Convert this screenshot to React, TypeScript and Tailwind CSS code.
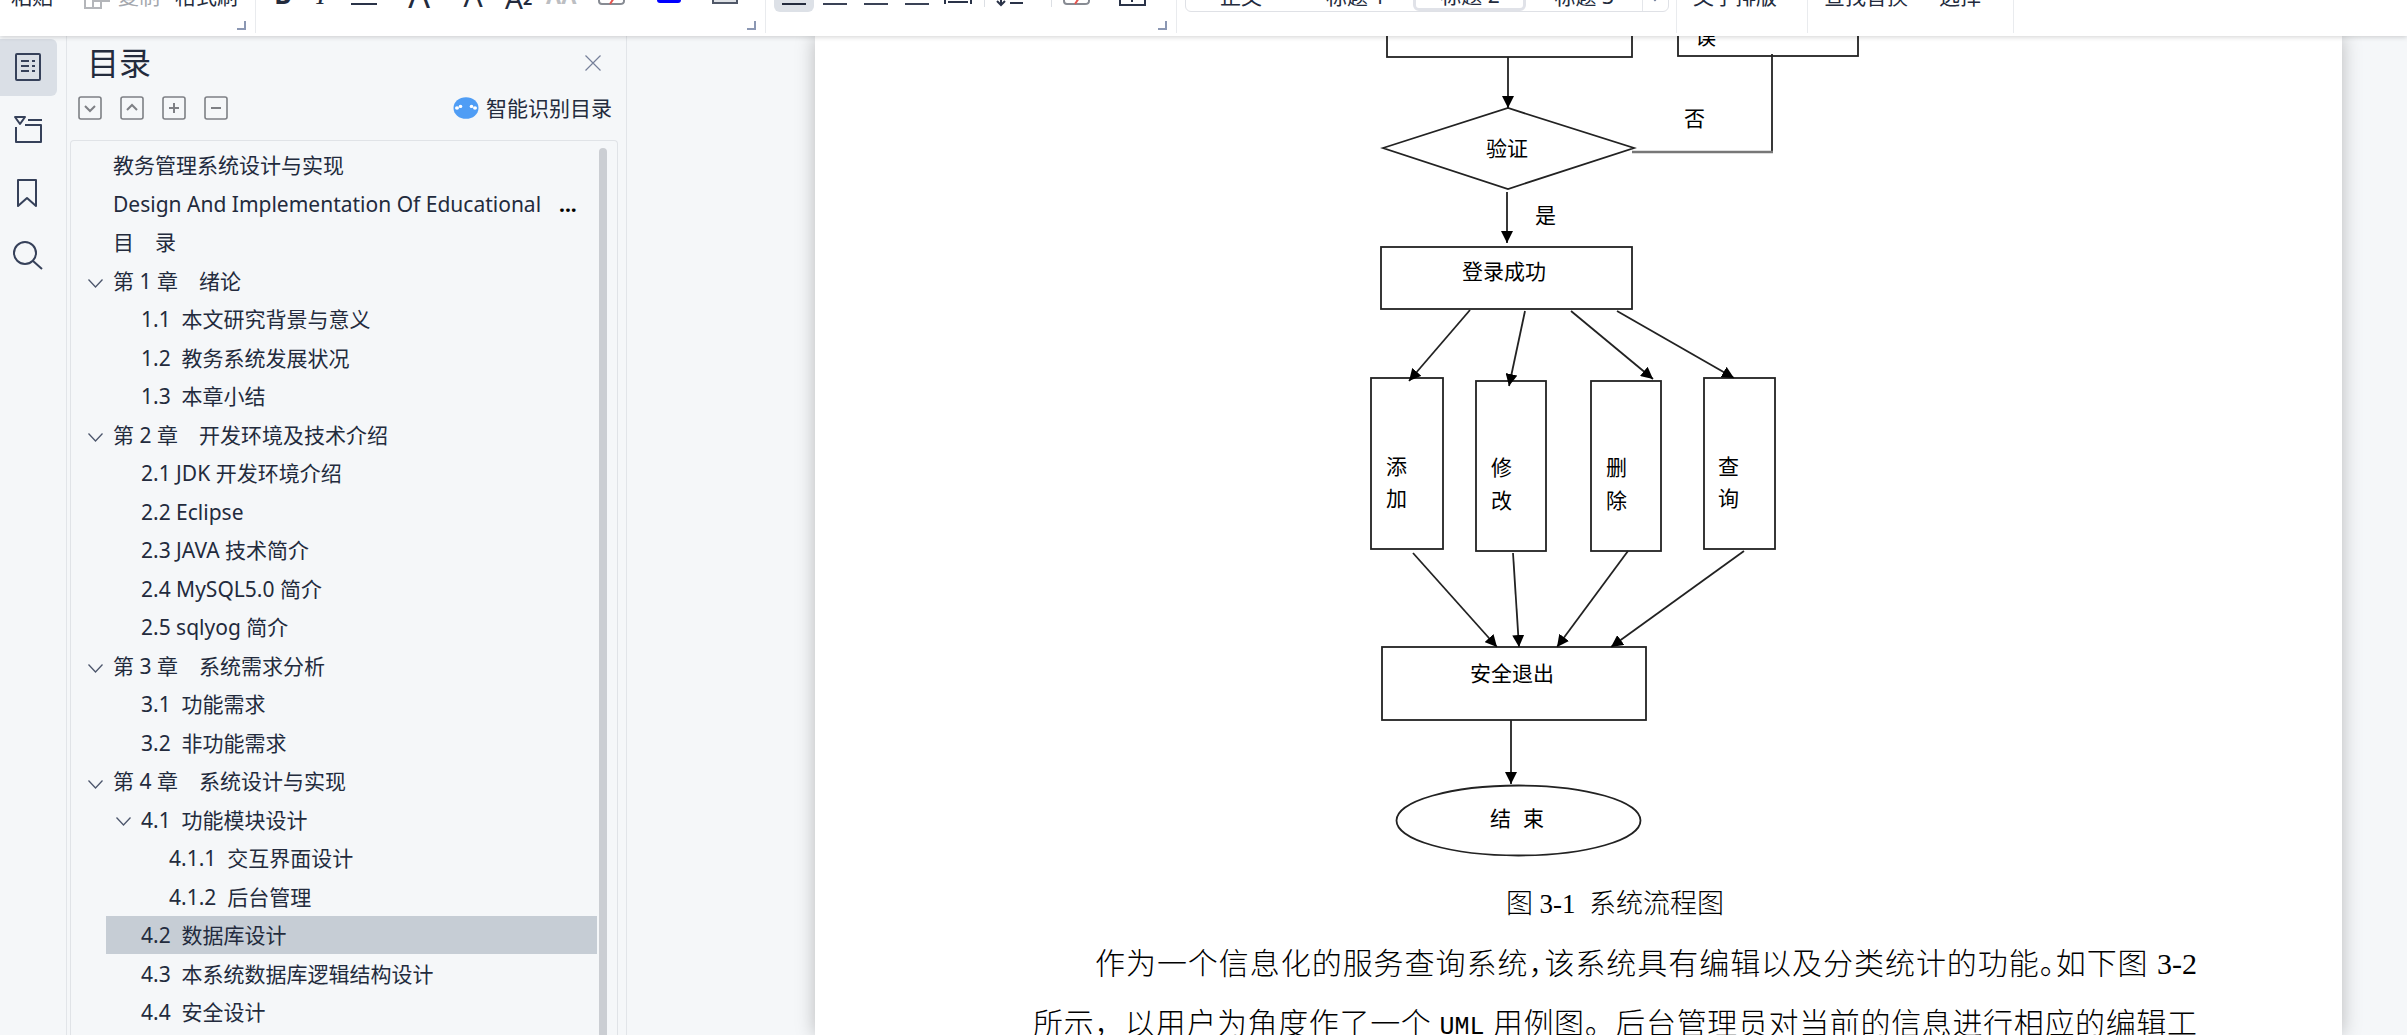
import React from 'react';

const UI_FONT = "font-['Noto_Sans','Noto_Sans_CJK_SC',sans-serif]";

/* ---------- ribbon ---------- */

function Divider({ short = false }: { short?: boolean }) {
  return <div className={short ? 'h-[7px] w-px shrink-0 bg-[#dcdfe4]' : 'h-[33px] w-px shrink-0 bg-[#e9ebee]'} />;
}

function Launcher({ label, className }: { label: string; className: string }) {
  return (
    <button aria-label={label} className={`mt-[21px] h-[9px] w-[9px] shrink-0 ${className}`}>
      <svg viewBox="0 0 9 9" className="h-[9px] w-[9px]" fill="none" stroke="#8b97b3" strokeWidth="2">
        <path d="M8 0V8H0" />
      </svg>
    </button>
  );
}

function TextButton({ children, className = '' }: { children: React.ReactNode; className?: string }) {
  return (
    <button className={`-mt-[15px] h-[22px] shrink-0 whitespace-nowrap text-[21px] leading-[22px] ${className}`}>
      {children}
    </button>
  );
}

function IconButton({ label, className = '', children }: { label: string; className?: string; children: React.ReactNode }) {
  return (
    <button aria-label={label} className={`-mt-[14px] h-[26px] shrink-0 ${className}`}>
      <svg viewBox="0 0 28 26" className="h-[26px] w-[28px]" fill="none" stroke="#2a3348" strokeWidth="2">
        {children}
      </svg>
    </button>
  );
}

function Ribbon() {
  return (
    <header className="relative z-10 flex h-9 shrink-0 items-start overflow-hidden bg-white text-[#232b3d] shadow-[0_1px_5px_rgba(0,0,0,0.18)]">
      <div className="flex w-[255px] shrink-0 items-start pl-[11px]">
        <TextButton>粘贴</TextButton>
        <IconButton label="复制图标" className="ml-[31px]">
          <path d="M9 5V22H1V13H9M9 5H25V15H9Z" stroke="#b4b6ba" />
          <path d="M1 12V22H17V15" stroke="#b4b6ba" />
        </IconButton>
        <TextButton className="ml-[6px] text-[#a4a7ad]">复制</TextButton>
        <TextButton className="ml-[15px]">格式刷</TextButton>
        <Launcher label="剪贴板设置" className="-ml-px" />
      </div>
      <Divider />
      <div className="flex w-[509px] shrink-0 items-start pl-[17px]">
        <button aria-label="加粗" className="-mt-[19px] h-[26px] w-[20px] text-[26px] font-bold leading-[26px]">B</button>
        <button aria-label="倾斜" className="-mt-[18px] ml-[18px] h-[26px] w-[20px] font-['Liberation_Serif',serif] text-[28px] italic leading-[26px]">I</button>
        <IconButton label="下划线" className="ml-[19px]">
          <path d="M1 18H27" />
        </IconButton>
        <button aria-label="增大字号" className="-mt-[18px] ml-[29px] h-[26px] w-[24px] text-[34px] leading-[26px]">A</button>
        <button aria-label="减小字号" className="-mt-[17px] ml-[31px] h-[26px] w-[22px] text-[30px] leading-[26px]">A</button>
        <button aria-label="下标" className="-mt-[19px] ml-[21px] flex h-[30px] w-[32px] items-end text-[28px] leading-[26px]">
          A<span className="text-[16px] font-bold leading-[24px]">2</span>
        </button>
        <button aria-label="文字效果" className="-mt-[18px] ml-[9px] h-[26px] w-[29px] text-[22px] font-bold leading-[26px] text-[#bcbec2]">AA</button>
        <IconButton label="清除格式" className="ml-[23px]">
          <path d="M1 4V15Q1 18 4 18H22Q26 18 26 15V4" stroke="#878b93" />
          <path d="M12 18L20 6" stroke="#e4554f" />
        </IconButton>
        <button aria-label="字体颜色" className="ml-[31px] h-[3px] w-[24px] rounded-b-sm bg-[#0000ff]" />
        <IconButton label="字符底纹" className="ml-[31px]">
          <path d="M1 4V17H25V4" fill="#dfe2e6" stroke="#505868" />
        </IconButton>
        <Launcher label="字体设置" className="ml-[7px]" />
      </div>
      <Divider />
      <div className="flex w-[410px] shrink-0 items-start pl-[8px]">
        <button aria-label="左对齐" className="flex h-[12px] w-[40px] items-start rounded-b-md bg-[#dde1e7] px-2 pt-[3px]">
          <span className="h-[2px] flex-1 bg-[#232b3d]" />
        </button>
        <button aria-label="居中" className="mt-[3px] ml-[9px] h-[2px] w-[24px] bg-[#3a4256]" />
        <button aria-label="右对齐" className="mt-[3px] ml-[17px] h-[2px] w-[24px] bg-[#3a4256]" />
        <button aria-label="两端对齐" className="mt-[3px] ml-[17px] h-[2px] w-[24px] bg-[#3a4256]" />
        <IconButton label="分散对齐" className="ml-[15px] mr-[12px]">
          <path d="M1 4V18M27 4V18M4 16H24" />
        </IconButton>
        <Divider short />
        <IconButton label="行距" className="ml-[11px] mr-[27px]">
          <path d="M5 4V19M1 15L5 19L9 15M14 17H27" />
        </IconButton>
        <Divider short />
        <IconButton label="底纹" className="ml-[11px]">
          <path d="M1 4V15Q1 18 4 18H22Q26 18 26 15V4" stroke="#878b93" />
          <path d="M12 18L18 9" stroke="#e4554f" />
        </IconButton>
        <IconButton label="边框" className="ml-[28px]">
          <path d="M1 4V19H26V4M13 4V16" />
        </IconButton>
        <Launcher label="段落设置" className="ml-[11px]" />
      </div>
      <Divider />
      <div className="flex w-[499px] shrink-0 items-start pl-[8px]">
        <div className="-mt-[30px] flex h-[42px] w-[484px] items-start rounded-b-md border border-[#dfe1e6] pt-[14px]">
          <button className="ml-[34px] h-[21px] text-[21px] leading-[20px]">正文</button>
          <button className="ml-[64px] h-[21px] text-[21px] leading-[20px]">标题 1</button>
          <button className="-mt-[14px] ml-[28px] flex h-[40px] w-[113px] items-start justify-center rounded-b-md border-[3px] border-[#e0e2e8] pt-[11px] text-[21px] leading-[20px]">
            标题 2
          </button>
          <button className="ml-[28px] h-[21px] text-[21px] leading-[20px]">标题 3</button>
          <div className="-mt-[14px] ml-[28px] h-[40px] w-px bg-[#e4e6ea]" />
          <button aria-label="更多样式" className="ml-[8px] mt-[10px]">
            <svg viewBox="0 0 8 7" className="h-[7px] w-[8px]" fill="none" stroke="#6b7896" strokeWidth="2">
              <path d="M1 2L4 5L7 2" />
            </svg>
          </button>
        </div>
      </div>
      <Divider />
      <div className="flex w-[130px] shrink-0 items-start pl-[16px]">
        <TextButton>文字排版</TextButton>
      </div>
      <Divider />
      <div className="flex w-[205px] shrink-0 items-start gap-[31px] pl-[16px]">
        <TextButton>查找替换</TextButton>
        <TextButton>选择</TextButton>
      </div>
      <Divider />
    </header>
  );
}

/* ---------- navigation rail ---------- */

function RailButton({ label, active = false, children }: { label: string; active?: boolean; children: React.ReactNode }) {
  return (
    <button
      aria-label={label}
      aria-pressed={active}
      className={`flex h-[57px] w-[57px] items-center justify-center rounded-r-md pr-[2px] pb-[2px] ${active ? 'bg-[#dadfe6]' : ''}`}
    >
      <svg viewBox="0 0 30 30" className="h-[30px] w-[30px]" fill="none" stroke="#36415a" strokeWidth="2" strokeLinejoin="round">
        {children}
      </svg>
    </button>
  );
}

function Rail() {
  return (
    <nav aria-label="导航" className="flex w-[67px] shrink-0 flex-col gap-[6px] border-r border-[#e2e5e9] pt-[3px]">
      <RailButton label="目录" active>
        <rect x="3" y="2" width="24" height="26" rx="1" />
        <path d="M8 9H16M19 9H22M8 14H16M19 14H22M8 19H16M19 19H22" />
      </RailButton>
      <RailButton label="章节">
        <path d="M2 2H12L7 9ZM15 5H29M3 12V27H28V10H12" />
      </RailButton>
      <RailButton label="书签">
        <path d="M5 2H23V28L14 20L5 28Z" />
      </RailButton>
      <RailButton label="查找">
        <ellipse cx="12" cy="12" rx="11" ry="11" />
        <path d="M20 20L29 28" />
      </RailButton>
    </nav>
  );
}

/* ---------- outline panel ---------- */

type Item = { text: string; level: 1 | 2 | 3; open?: boolean; selected?: boolean; cut?: boolean };

const OUTLINE: Item[] = [
  { text: '教务管理系统设计与实现', level: 1 },
  { text: 'Design And Implementation Of Educational', level: 1, cut: true },
  { text: '目\u3000录', level: 1 },
  { text: '第 1 章\u3000绪论', level: 1, open: true },
  { text: '1.1  本文研究背景与意义', level: 2 },
  { text: '1.2  教务系统发展状况', level: 2 },
  { text: '1.3  本章小结', level: 2 },
  { text: '第 2 章\u3000开发环境及技术介绍', level: 1, open: true },
  { text: '2.1 JDK 开发环境介绍', level: 2 },
  { text: '2.2 Eclipse', level: 2 },
  { text: '2.3 JAVA 技术简介', level: 2 },
  { text: '2.4 MySQL5.0 简介', level: 2 },
  { text: '2.5 sqlyog 简介', level: 2 },
  { text: '第 3 章\u3000系统需求分析', level: 1, open: true },
  { text: '3.1  功能需求', level: 2 },
  { text: '3.2  非功能需求', level: 2 },
  { text: '第 4 章\u3000系统设计与实现', level: 1, open: true },
  { text: '4.1  功能模块设计', level: 2, open: true },
  { text: '4.1.1  交互界面设计', level: 3 },
  { text: '4.1.2  后台管理', level: 3 },
  { text: '4.2  数据库设计', level: 2, selected: true },
  { text: '4.3  本系统数据库逻辑结构设计', level: 2 },
  { text: '4.4  安全设计', level: 2 },
];

function Chevron() {
  return (
    <svg viewBox="0 0 15 9" className="h-[9px] w-[15px] shrink-0" fill="none" stroke="#4c566c" strokeWidth="1.3">
      <path d="M0.5 0.5L7.5 8L14.5 0.5" />
    </svg>
  );
}

const INDENT = { 1: 'pl-[7px]', 2: 'pl-[35px]', 3: 'pl-[63px]' };

function OutlineRow({ item }: { item: Item }) {
  const nestedOpen = item.open && item.level === 2;
  return (
    <li className="flex h-[38px] items-center pl-[17px] even:h-[39px]">
      <span className="mr-[3px] flex w-[15px] shrink-0 pt-[6px]">{item.open && item.level === 1 && <Chevron />}</span>
      <a
        href="#outline"
        className={`flex h-full min-w-0 flex-1 items-center whitespace-pre ${nestedOpen ? 'gap-[10px] pl-[10px]' : INDENT[item.level]} ${item.selected ? 'bg-[#c6cdd5]' : ''}`}
      >
        {nestedOpen && (
          <span className="pt-[4px]">
            <Chevron />
          </span>
        )}
        <span>{item.text}</span>
        {item.cut && <span className="ml-[18px] font-bold text-black">...</span>}
      </a>
    </li>
  );
}

function ToolBox({ label, d }: { label: string; d: string }) {
  return (
    <button aria-label={label} className="h-[24px] w-[24px]">
      <svg viewBox="0 0 24 24" className="h-[24px] w-[24px]" fill="none" stroke="#7e8085" strokeWidth="2">
        <rect x="1" y="1" width="22" height="22" rx="2" strokeWidth="1.6" />
        <path d={d} />
      </svg>
    </button>
  );
}

function OutlinePanel() {
  return (
    <aside className="flex w-[560px] shrink-0 flex-col border-r border-[#e2e5e9] pl-[3px] pr-[8px]">
      <div className="flex h-[54px] items-center justify-between pl-[17px] pr-[17px]">
        <h1 className="text-[32px] leading-[40px]">目录</h1>
        <button aria-label="关闭">
          <svg viewBox="0 0 16 16" className="h-[16px] w-[16px]" fill="none" stroke="#76809a" strokeWidth="1.2">
            <path d="M0.5 0.5L15.5 15.5M15.5 0.5L0.5 15.5" />
          </svg>
        </button>
      </div>
      <div className="flex h-[36px] items-center justify-between pl-[8px] pr-[6px]">
        <div className="flex gap-[18px]">
          <ToolBox label="展开" d="M7 10L12 15L17 10" />
          <ToolBox label="收起" d="M7 14L12 9L17 14" />
          <ToolBox label="增加级别" d="M12 7V17M7 12H17" />
          <ToolBox label="降低级别" d="M7 12H17" />
        </div>
        <button className="flex items-center gap-[7px] text-[21px] leading-[28px]">
          <svg viewBox="0 0 26 22" className="h-[22px] w-[26px]">
            <ellipse cx="13" cy="11" rx="12.5" ry="10.8" fill="#4f9df5" />
            <g fill="#fff">
              <ellipse cx="4" cy="11" rx="2" ry="1.8" />
              <ellipse cx="7.5" cy="9.4" rx="1.8" ry="1.6" />
              <ellipse cx="18.5" cy="9.4" rx="1.8" ry="1.6" />
              <ellipse cx="22" cy="11" rx="2" ry="1.8" />
            </g>
          </svg>
          智能识别目录
        </button>
      </div>
      <div className="mt-[14px] flex min-h-0 flex-1 overflow-hidden rounded-t border border-b-0 border-[#e0e3e7]">
        <ul className="min-w-0 flex-1 pt-[5px] text-[21px] leading-[30px]">
          {OUTLINE.map((item) => (
            <OutlineRow key={item.text} item={item} />
          ))}
        </ul>
        <div className="ml-[2px] mr-[10px] mt-[7px] w-[8px] rounded-t-full bg-[#cbced3]" />
      </div>
    </aside>
  );
}

/* ---------- document ---------- */

const ARROWS: [number, number, number, number][] = [
  [1508, 57, 1508, 108],
  [1507, 192, 1507, 243],
  [1470, 310, 1409, 381],
  [1525, 311, 1509, 386],
  [1571, 311, 1653, 379],
  [1617, 311, 1734, 378],
  [1413, 553, 1497, 647],
  [1513, 553, 1519, 647],
  [1628, 551, 1557, 647],
  [1744, 551, 1611, 647],
  [1511, 720, 1511, 784],
];

const BOXES: [number, number, number, number][] = [
  [1387, 0, 245, 57],
  [1678, 0, 180, 56],
  [1381, 247, 251, 62],
  [1371, 378, 72, 171],
  [1476, 381, 70, 170],
  [1591, 381, 70, 170],
  [1704, 378, 71, 171],
  [1382, 647, 264, 73],
];

const LABELS: [string, number, number][] = [
  ['误', 1695, 37],
  ['验证', 1486, 149],
  ['否', 1684, 119],
  ['是', 1535, 216],
  ['登录成功', 1462, 272],
  ['添', 1386, 467],
  ['加', 1386, 499],
  ['修', 1491, 468],
  ['改', 1491, 501],
  ['删', 1606, 468],
  ['除', 1606, 501],
  ['查', 1718, 467],
  ['询', 1718, 499],
  ['安全退出', 1470, 674],
  ['结', 1490, 819],
  ['束', 1523, 819],
];

function Flowchart() {
  return (
    <svg viewBox="1365 36 500 836" className="mx-auto h-[836px] w-[500px]" role="img" aria-label="系统流程图">
      <defs>
        <marker id="head" viewBox="0 0 12 12" refX="12" refY="6" markerWidth="12" markerHeight="12" markerUnits="userSpaceOnUse" orient="auto">
          <path d="M0 0L12 6L0 12Z" fill="#000" />
        </marker>
      </defs>
      <g fill="none" stroke="#222" strokeWidth="1.8">
        {BOXES.map(([x, y, w, h]) => (
          <rect key={`${x}-${y}`} x={x} y={y} width={w} height={h} />
        ))}
        <path d="M1383 148L1508 108L1634 148L1508 189Z" />
        <path d="M1772 54V152" />
        <path d="M1632 152H1773" stroke="#777" strokeWidth="2.4" />
        <ellipse cx="1518.5" cy="820.5" rx="122" ry="35" />
        {ARROWS.map(([x1, y1, x2, y2]) => (
          <line key={`${x1}-${x2}-${y2}`} x1={x1} y1={y1} x2={x2} y2={y2} markerEnd="url(#head)" />
        ))}
      </g>
      <g className="fill-black font-['Noto_Sans_CJK_SC',sans-serif] text-[21px] font-normal">
        {LABELS.map(([text, x, y]) => (
          <text key={text} x={x} y={y + 7}>
            {text}
          </text>
        ))}
      </g>
    </svg>
  );
}

function Document() {
  return (
    <main className="flex min-w-0 flex-1 pl-[188px] pr-[65px]">
      <article className="min-w-0 flex-1 bg-white pl-[218px] pr-[145px] font-['Liberation_Serif','Noto_Sans_CJK_SC',serif] font-light text-black shadow-[0_0_18px_rgba(0,0,0,0.25)]">
        <figure>
          <Flowchart />
          <figcaption className="pt-[2px] text-center text-[27px] leading-[60px]">图 3-1&nbsp; 系统流程图</figcaption>
        </figure>
        <p className="indent-[62px] text-[30px] leading-[60px] [text-align-last:justify]">
          作为一个信息化的服务查询系统<span className="[font-feature-settings:'halt']">，</span>该系统具有编辑以及分类统计的功能<span className="[font-feature-settings:'halt']">。</span>如下图 3-2
          <br />
          所示，以用户为角度作了一个 <span className="font-['Liberation_Mono',monospace] text-[25px]">UML</span> 用例图。后台管理员对当前的信息进行相应的编辑工
        </p>
      </article>
    </main>
  );
}

export default function App() {
  return (
    <div className={`flex h-screen flex-col overflow-hidden bg-[#f5f7f9] text-[#232b3d] ${UI_FONT}`}>
      <Ribbon />
      <div className="flex min-h-0 flex-1">
        <Rail />
        <OutlinePanel />
        <Document />
      </div>
    </div>
  );
}
